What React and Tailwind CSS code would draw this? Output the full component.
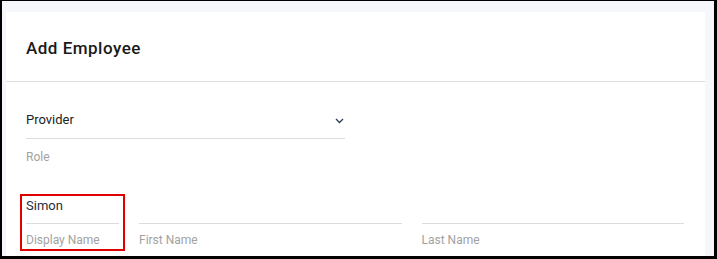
import React from 'react';

const font = { fontFamily: 'Roboto, "Liberation Sans", sans-serif' };

function Field({ value, label, className = '' }) {
  return (
    <div className={`flex flex-col ${className}`}>
      <div className="flex h-[36px] items-center border-b border-[#dcdcdc] text-[13px] text-[#2a2c3a]">
        {value}
      </div>
      <div className="pt-[8px] text-[12px] leading-[16px] text-[#a2a2a2]">{label}</div>
    </div>
  );
}

export default function App() {
  return (
    <div className="h-[259px] w-[717px] overflow-hidden bg-black pl-[2px] pr-[3px] pt-[1px] pb-[3px]" style={font}>
      <div className="h-full overflow-hidden bg-[#f6f7fb] pl-[4px] pr-[9px] pt-[11px]">
        <div className="h-[300px] bg-white">
          <div className="flex h-[70px] items-center border-b border-[#dedede] px-[20px] pt-[5px]">
            <h1 className="text-[17px] font-medium tracking-[0.5px] text-[#1a1a1a]">Add Employee</h1>
          </div>
          <div className="px-[20px] pt-[19px]">
            <div className="flex w-[319px] flex-col">
              <div className="flex h-[38px] items-center justify-between border-b border-[#dcdcdc] text-[13px] text-[#212121]">
                <span>Provider</span>
                <svg width="9" height="6" viewBox="0 0 9 6" className="mr-[1px] mt-[2px]">
                  <path d="M1 1l3.5 3.5L8 1" fill="none" stroke="#2b3a55" strokeWidth="1.3" />
                </svg>
              </div>
              <div className="pt-[10px] text-[12px] leading-[16px] text-[#a2a2a2]">Role</div>
            </div>
            <div className="mt-[23px] flex w-[658px] gap-[20px]">
              <div className="relative w-[93px]">
                <Field value="Simon" label="Display Name" />
                <div className="pointer-events-none absolute -left-[6px] -right-[6px] top-[6px] h-[57px] border-2 border-[#e00000]" />
              </div>
              <Field value="" label="First Name" className="flex-1" />
              <Field value="" label="Last Name" className="flex-1" />
            </div>
          </div>
        </div>
      </div>
    </div>
  );
}
